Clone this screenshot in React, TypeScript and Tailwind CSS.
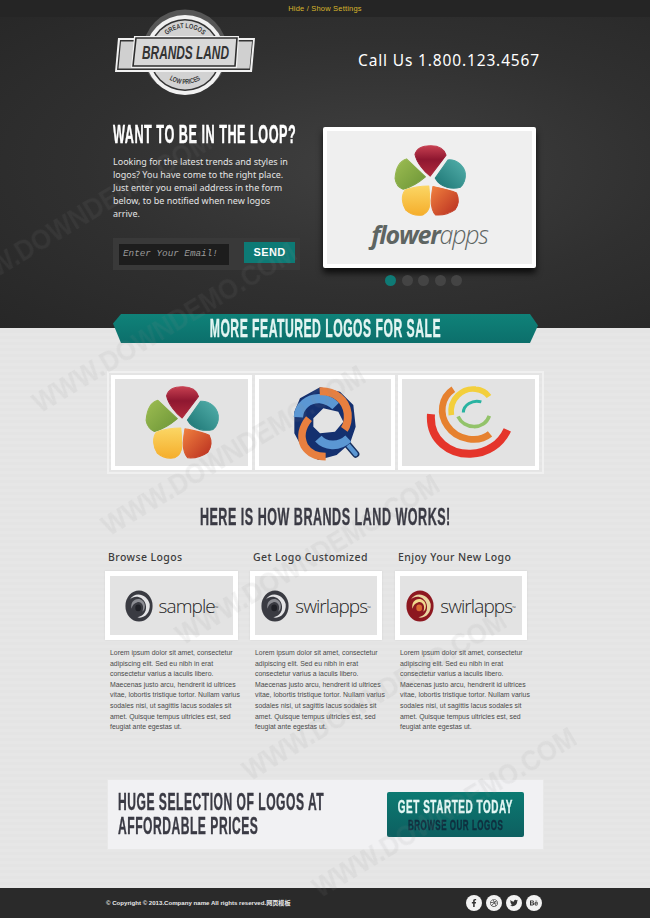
import React from "react";
import { FaFacebookF, FaDribbble, FaTwitter, FaBehance } from "react-icons/fa";

const wm: [number, number][] = [
  [-50, 279], [35, 390], [104, 513], [178, 622], [245, 758], [315, 875],
];

function Flower({ className, id }: { className: string; id: string }) {
  return (
    <svg viewBox="130 60 225 225" className={className} strokeWidth="3" strokeLinejoin="round">
      <defs>
        <linearGradient id={`${id}r`} x1="0" y1="0" x2="0" y2="1"><stop offset="0" stopColor="#c63f50" /><stop offset="0.45" stopColor="#8f1730" /><stop offset="1" stopColor="#b02a3c" /></linearGradient>
        <linearGradient id={`${id}t`} x1="1" y1="0" x2="0" y2="1"><stop offset="0" stopColor="#55b1ac" /><stop offset="1" stopColor="#1b7473" /></linearGradient>
        <linearGradient id={`${id}g`} x1="0" y1="0" x2="1" y2="1"><stop offset="0" stopColor="#9dbd52" /><stop offset="1" stopColor="#6b9436" /></linearGradient>
        <linearGradient id={`${id}y`} x1="0" y1="0" x2="0" y2="1"><stop offset="0" stopColor="#fbd664" /><stop offset="1" stopColor="#f5ae2c" /></linearGradient>
        <linearGradient id={`${id}o`} x1="0" y1="0" x2="1" y2="1"><stop offset="0" stopColor="#f0803e" /><stop offset="1" stopColor="#b82d20" /></linearGradient>
      </defs>
      <path d="M198 94C203 74 225 68 245 68 265 68 284 76 290 96L243 158C226 146 203 118 198 94Z" fill={`url(#${id}r)`} stroke={`url(#${id}r)`} />
      <path d="M258 164 296 110C322 108 344 128 347 150 349 170 340 184 332 191 310 197 275 194 258 164Z" fill={`url(#${id}t)`} stroke={`url(#${id}t)`} />
      <path d="M229 160 173 107C152 113 141 136 139 165 141 181 152 193 163 197 190 190 215 172 229 160Z" fill={`url(#${id}g)`} stroke={`url(#${id}g)`} />
      <path d="M239 187C220 187 190 191 169 199 156 215 159 240 171 259 185 271 205 276 221 273 234 267 241 255 242 240 242 225 241 205 239 187Z" fill={`url(#${id}y)`} stroke={`url(#${id}y)`} />
      <path d="M251 189C270 193 300 198 321 208 329 225 329 240 317 257 300 269 280 275 259 273 249 262 246 245 246 230 247 215 249 200 251 189Z" fill={`url(#${id}o)`} stroke={`url(#${id}o)`} />
    </svg>
  );
}

function QLogo({ className }: { className: string }) {
  return (
    <svg viewBox="0 0 240 255" className={className} fill="none">
      <path d="M185 190 212 222" stroke="#16305f" strokeWidth="22" strokeLinecap="round" />
      <path d="M185 190 212 222" stroke="#5b97d3" strokeWidth="13" strokeLinecap="round" />
      <path fillRule="evenodd" fill="#14306f" d="M45 55 105 22 165 35 205 75 212 140 195 190 155 225 100 240 55 210 28 160 28 95ZM85 115 85 140 105 160 150 155 175 125 160 95 115 85Z" />
      <path d="M40 112C42 78 70 54 105 56 125 58 140 66 152 78" stroke="#5b97d3" strokeWidth="28" />
      <path d="M104 34C150 32 183 60 188 100 190 122 185 138 178 148" stroke="#e87f3f" strokeWidth="24" />
      <path d="M72 116C52 140 44 170 58 198 72 220 95 230 122 230" stroke="#e87f3f" strokeWidth="23" />
      <path d="M100 176C120 198 160 204 190 176" stroke="#5b97d3" strokeWidth="26" />
    </svg>
  );
}

function CLogo({ className }: { className: string }) {
  return (
    <svg viewBox="970 55 270 230" className={className} fill="none">
      <path d="M991 145C985 225 1050 266 1110 264 1160 262 1200 235 1220 192" stroke="#e5352b" strokeWidth="24" />
      <path d="M1058 70C1020 95 1015 145 1040 180 1070 225 1135 232 1168 204" stroke="#e6812f" strokeWidth="20" />
      <path d="M1052 148C1045 100 1085 65 1125 70 1145 72 1158 82 1165 92" stroke="#f3cf3c" strokeWidth="17" />
      <path d="M1072 152C1090 190 1150 195 1166 150" stroke="#93c36a" strokeWidth="11" />
      <path d="M1142 108C1115 100 1088 118 1088 140" stroke="#29b3a1" strokeWidth="9" />
    </svg>
  );
}

function Swirl({ red }: { red?: boolean }) {
  return (
    <svg viewBox="0 0 34 34" preserveAspectRatio="none" className="w-[28px] h-[32px] shrink-0">
      <circle cx="17" cy="17" r="16.5" fill={red ? "#8d1820" : "#3a3b42"} />
      <path d="M6 10C12 1 27 4 30 15 31 25 23 31 15 29 24 28 27 21 25 15 22 7 12 5 6 10Z" fill={red ? "#e9d5a0" : "#e4e4e6"} />
      <path d="M8 20C6 13 12 8 19 10 25 12 26 20 21 23 24 17 20 12 15 13 11 14 9 16 8 20Z" fill={red ? "#f0d98e" : "#8b8c92"} />
      <circle cx="16" cy="19" r="3.5" fill={red ? "#d96a33" : "#1f2026"} />
    </svg>
  );
}

const lorem = (
  <>
    Lorem ipsum dolor sit amet, consectetur<br />
    adipiscing elit. Sed eu nibh in erat<br />
    consectetur varius a iaculis libero.<br />
    Maecenas justo arcu, hendrerit id ultrices<br />
    vitae, lobortis tristique tortor. Nullam varius<br />
    sodales nisi, ut sagittis lacus sodales sit<br />
    amet. Quisque tempus ultricies est, sed<br />
    feugiat ante egestas ut.
  </>
);

const heading = "font-['Liberation_Sans',sans-serif] font-bold whitespace-nowrap tracking-[1px] [-webkit-text-stroke:0.4px_currentColor]";
const body = "font-['Noto_Sans','Open_Sans',sans-serif]";

export default function App() {
  return (
    <div className="relative w-[650px] h-[918px] overflow-hidden bg-[#e6e6e6] flex flex-col">
      <div className="h-[17px] shrink-0 bg-[#252525] flex items-center justify-center text-[7.5px] text-[#d9b52c] font-['Liberation_Sans',sans-serif] tracking-[0.2px]">
        Hide / Show Settings
      </div>

      <div className="h-[311px] shrink-0 bg-[radial-gradient(ellipse_at_58%_48%,#404040_0%,#303030_55%,#272727_100%)] pl-[113px]">
        <div className="flex items-start h-[107px]">
          <svg viewBox="110 5 150 95" className="relative -ml-[3px] -mt-[12px] w-[150px] h-[95px] shrink-0">
            <defs>
              <path id="arcTop" d="M158 55A27 27 0 0 1 212 55" />
              <path id="arcBot" d="M156 55A29 29 0 0 0 214 55" />
            </defs>
            <circle cx="185" cy="52" r="42.5" fill="#565656" />
            <circle cx="185" cy="55" r="40" fill="#f1f1f1" />
            <circle cx="185" cy="55" r="36" fill="#333" />
            <circle cx="185" cy="55" r="34.5" fill="#d2d2d2" />
            <text fontSize="7" fontWeight="700" fill="#3a3a3a" fontFamily="Liberation Sans">
              <textPath href="#arcTop" startOffset="50%" textAnchor="middle" textLength="40" lengthAdjust="spacingAndGlyphs">GREAT LOGOS</textPath>
            </text>
            <text fontSize="7" fontWeight="700" fill="#3a3a3a" fontFamily="Liberation Sans">
              <textPath href="#arcBot" startOffset="50%" textAnchor="middle" textLength="33" lengthAdjust="spacingAndGlyphs">LOW PRICES</textPath>
            </text>
            <path d="M118 38H255L252 72H115Z" fill="#f1f1f1" />
            <path d="M120 40H253L250 70H117Z" fill="#333" />
            <path d="M121 41.500H252L249.500 68.500H118.500Z" fill="#d0d0d0" />
            <path d="M134 36H239L237 68H131Z" fill="#f1f1f1" />
            <path d="M136 38H237L235 66H133Z" fill="#d8d8d8" stroke="#2e2e2e" strokeWidth="1.6" />
            <text x="185.500" y="58.500" textAnchor="middle" fontSize="17.500" fontWeight="700" fontStyle="italic" fill="#333" fontFamily="Liberation Sans" textLength="87" lengthAdjust="spacingAndGlyphs">BRANDS LAND</text>
          </svg>
          <div className={`ml-[98px] mt-[33px] text-[15.5px] leading-[20px] font-normal text-white tracking-[0.85px] whitespace-nowrap ${body}`}>Call Us 1.800.123.4567</div>
        </div>

        <div className="flex">
          <div className="w-[210px] shrink-0">
            <h1 className={`${heading} text-[25px] leading-[25px] -mt-[2px] text-white origin-left scale-x-[0.507]`}>WANT TO BE IN THE LOOP?</h1>
            <p className={`${body} mt-[8px] text-[9px] leading-[13px] text-[#e4e4e4] whitespace-nowrap`}>
              Looking for the latest trends and styles in<br />
              logos? You have come to the right place.<br />
              Just enter you email address in the form<br />
              below, to be notified when new logos<br />
              arrive.
            </p>
            <div className="mt-[18px] w-[187px] h-[32px] bg-[#393939] flex items-center pl-[6px]">
              <div className="w-[110px] h-[21px] bg-[#1d1d1d] flex items-center pl-[4px] font-['Liberation_Mono',monospace] italic text-[9.300px] text-[#9a9a9a] whitespace-nowrap">Enter Your Email!</div>
              <div className="ml-[15px] -mt-[4px] w-[51px] h-[21px] bg-[#0d7a75] flex items-center justify-center font-['Liberation_Sans',sans-serif] font-bold text-[11px] text-white tracking-[0.3px]">SEND</div>
            </div>
          </div>
          <div className="mt-[3px]">
            <div className="w-[213px] h-[141px] border-[4px] border-white bg-[#efefef] rounded-[2px] shadow-[0_5px_6px_rgba(0,0,0,0.75)] flex flex-col items-center pt-[12px]">
              <Flower id="a" className="w-[76px] h-[76px]" />
              <div className="font-['Open_Sans',sans-serif] italic text-[25px] leading-[30px] tracking-[-1.2px] text-[#5e6562]">
                <span className="font-bold">flower</span><span className="font-light">apps</span>
              </div>
            </div>
            <div className="mt-[7px] flex justify-center gap-[5.500px] pr-[12px]">
              <span className="w-[11px] h-[11px] rounded-full bg-[#0f7a75]" />
              <span className="w-[11px] h-[11px] rounded-full bg-[#444]" />
              <span className="w-[11px] h-[11px] rounded-full bg-[#444]" />
              <span className="w-[11px] h-[11px] rounded-full bg-[#444]" />
              <span className="w-[11px] h-[11px] rounded-full bg-[#444]" />
            </div>
          </div>
        </div>
      </div>

      <div className="flex-1 bg-[repeating-linear-gradient(0deg,#e6e6e6_0px,#e6e6e6_3px,#e4e4e4_3px,#e4e4e4_6px)] pl-[107px]">
        <div className="relative -mt-[14px] ml-[6px] w-[425px] h-[29px] bg-[linear-gradient(#0f8279,#0c6f6b)] [clip-path:polygon(8px_0,calc(100%-8px)_0,100%_40%,calc(100%-8px)_100%,8px_100%,0_33%)] flex items-center justify-center">
          <h2 className={`${heading} text-[25px] text-[#e3f5f2] scale-x-[0.487]`}>MORE FEATURED LOGOS FOR SALE</h2>
        </div>

        <div className="mt-[28px] w-[437px] h-[103px] border-[2px] border-[#f0f0f0] p-[2px] flex gap-[3px] items-stretch">
          <div className="w-[141px] border-[4px] border-white bg-[#e3e3e3] flex items-center justify-center"><Flower id="b" className="w-[78px] h-[78px]" /></div>
          <div className="w-[140px] border-[4px] border-white bg-[#e3e3e3] flex items-center justify-center"><QLogo className="w-[80px] h-[85px]" /></div>
          <div className="w-[141px] border-[4px] border-white bg-[#e3e3e3] flex items-center justify-center"><CLogo className="w-[90px] h-[77px]" /></div>
        </div>

        <div className="mt-[28px] w-[437px] flex justify-center">
          <h2 className={`${heading} text-[24px] leading-[30px] text-[#3a3a44] scale-x-[0.522]`}>HERE IS HOW BRANDS LAND WORKS!</h2>
        </div>

        <div className="mt-[17px] -ml-[2px] flex gap-[12px]">
          {[
            { t: "Browse Logos", n: "sample", w: "w-[133px]" },
            { t: "Get Logo Customized", n: "swirlapps", w: "w-[132px]" },
            { t: "Enjoy Your New Logo", n: "swirlapps", w: "w-[132px] ml-[1px]", red: true },
          ].map((c) => (
            <div key={c.t} className={c.w}>
              <div className={`${body} pl-[3px] text-[10.500px] leading-[16px] tracking-[0.4px] font-medium text-[#3d3d3d] whitespace-nowrap`}>{c.t}</div>
              <div className="mt-[6px] h-[69px] border-[5px] border-white bg-[#e3e3e3] flex items-center justify-center gap-[6px] shadow-[0_0_2px_rgba(0,0,0,0.08)]">
                <Swirl red={c.red} />
                <span className="font-['Open_Sans',sans-serif] font-light text-[19px] leading-[24px] tracking-[-0.9px] text-[#1f1f25]">{c.n}<sup className="text-[5px] tracking-normal">™</sup></span>
              </div>
              <p className="mt-[8px] pl-[5px] font-['Liberation_Sans',sans-serif] text-[6.900px] leading-[10.600px] text-[#4a4a4a] whitespace-nowrap">{lorem}</p>
            </div>
          ))}
        </div>

        <div className="mt-[46px] w-[437px] h-[71px] bg-[#f1f1f3] border border-[#e8e8e8] flex items-center justify-between pl-[10px] pr-[19px]">
          <h2 className={`${heading} text-[23px] leading-[24px] text-[#3a3a44] origin-left scale-x-[0.525] w-[210px]`}>HUGE SELECTION OF LOGOS AT<br />AFFORDABLE PRICES</h2>
          <div className="w-[137px] h-[45px] rounded-[2px] bg-[linear-gradient(#0c7a72,#0d5f60)] flex flex-col items-center">
            <div className={`${heading} text-[18px] leading-[20px] mt-[5px] text-[#e3f7f4] scale-x-[0.552]`}>GET STARTED TODAY</div>
            <div className={`${heading} text-[15px] leading-[16px] text-[#0f2f3f] scale-x-[0.533]`}>BROWSE OUR LOGOS</div>
          </div>
        </div>
      </div>

      <div className="h-[30px] shrink-0 bg-[#2a2a2a] flex items-center pl-[106px] pr-[108px] justify-between">
        <div className="font-['Liberation_Sans','Noto_Sans_CJK_SC',sans-serif] font-bold text-[6.100px] text-[#e8e8e8]">© Copyright © 2013.Company name All rights reserved.网页模板</div>
        <div className="flex gap-[4px] pl-[2px] text-[8px] text-[#333]">
          {[FaFacebookF, FaDribbble, FaTwitter, FaBehance].map((I, i) => (
            <span key={i} className="w-[16px] h-[16px] rounded-full bg-[#f2f2f2] flex items-center justify-center"><I /></span>
          ))}
        </div>
      </div>

      {wm.map(([x, y], i) => (
        <div key={i} className="absolute pointer-events-none font-['Liberation_Sans',sans-serif] font-bold text-[30px] leading-[30px] text-[rgba(140,140,140,0.1)] whitespace-nowrap origin-left rotate-[-31deg] scale-x-[0.85] blur-[0.5px]" style={{ left: x, top: y }}>
          WWW.DOWNDEMO.COM
        </div>
      ))}
    </div>
  );
}
